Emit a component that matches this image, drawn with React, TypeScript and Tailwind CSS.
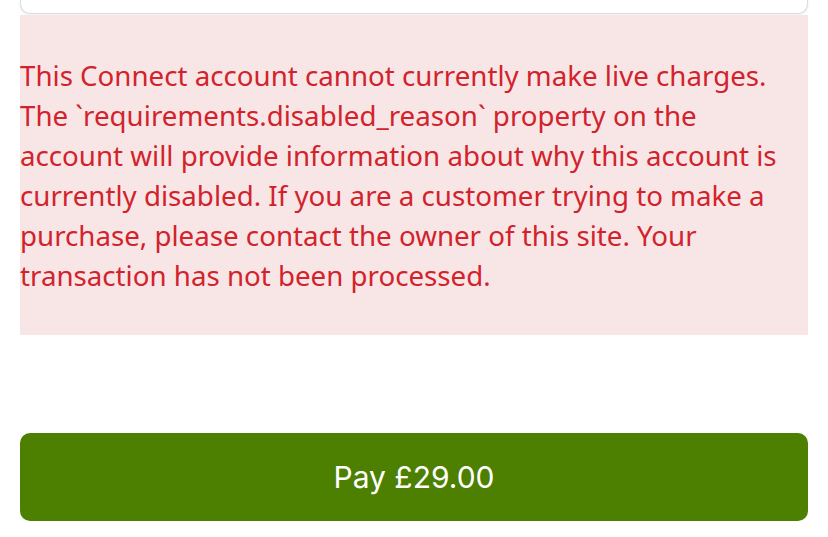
export default function App() {
  return (
    <div className="w-[828px] h-[537px] bg-white px-5 overflow-hidden">
      {/* bottom of the card above */}
      <div className="h-[14px] bg-white border border-t-0 border-[#dcdcdc] rounded-b-[10px] shadow-[0_1px_3px_rgba(0,0,0,0.08)]" />

      {/* error */}
      <div className="mt-[1px] bg-[#f8e6e7] py-10 text-[#d2232c] text-[27.7px] leading-[40px] font-['Noto_Sans',sans-serif] whitespace-nowrap">
        This Connect account cannot currently make live charges.
        <br />
        The `requirements.disabled_reason` property on the
        <br />
        account will provide information about why this account is
        <br />
        currently disabled. If you are a customer trying to make a
        <br />
        purchase, please contact the owner of this site. Your
        <br />
        transaction has not been processed.
      </div>

      {/* pay button */}
      <button className="mt-[98px] w-full h-[88px] rounded-[10px] bg-[#4d8000] text-white text-[30px] font-['Inter',sans-serif] flex items-center justify-center">
        Pay £29.00
      </button>
    </div>
  );
}
